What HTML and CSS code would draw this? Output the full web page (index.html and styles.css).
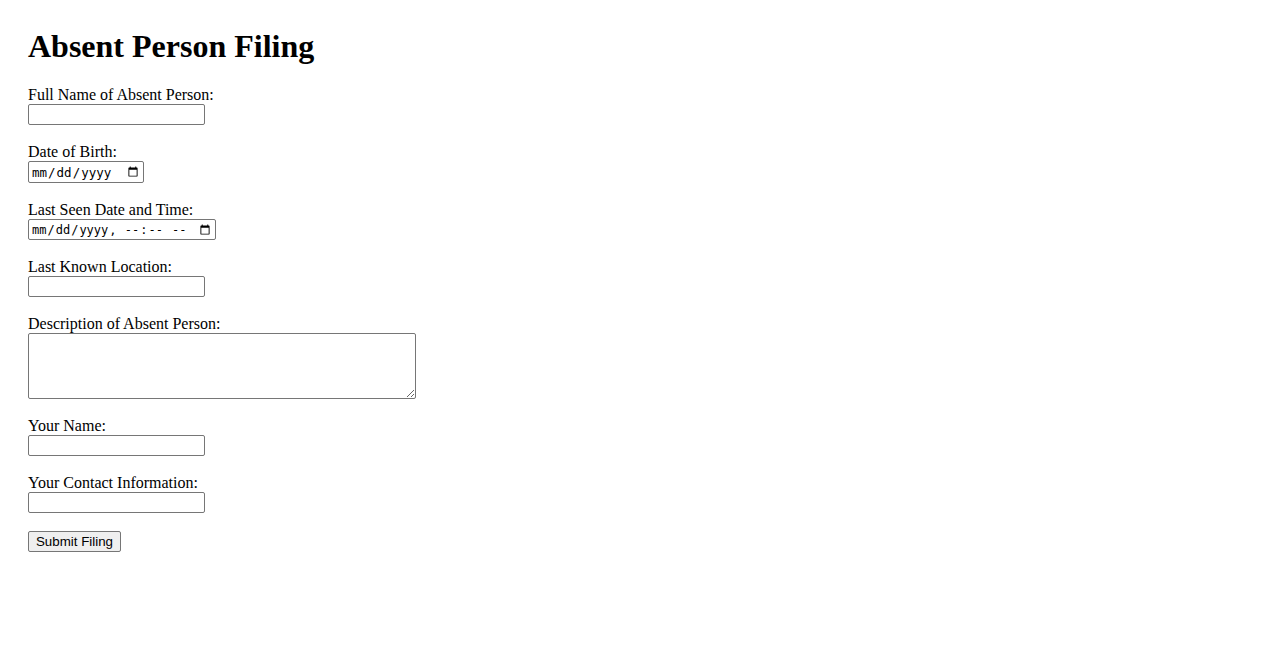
FILE: index.html
```html
<!DOCTYPE html>
<html lang="en">
<head>
<meta charset="utf-8">
<title>Absent Person Filing</title>
<link rel="stylesheet" href="styles.css">
</head>
<body>
<h1 class="title">Absent Person Filing</h1>
<form class="filing-form">
<label for="fullName">Full Name of Absent Person:</label><br>
<input class="field text-field" type="text" id="fullName" name="fullName"><br><br>
<label for="dob">Date of Birth:</label><br>
<input class="field date-field" type="date" id="dob" name="dob"><br><br>
<label for="lastSeen">Last Seen Date and Time:</label><br>
<input class="field datetime-field" type="datetime-local" id="lastSeen" name="lastSeen"><br><br>
<label for="location">Last Known Location:</label><br>
<input class="field text-field" type="text" id="location" name="location"><br><br>
<label for="description">Description of Absent Person:</label><br>
<textarea class="field area-field" id="description" name="description"></textarea><br><br>
<label for="yourName">Your Name:</label><br>
<input class="field text-field" type="text" id="yourName" name="yourName"><br><br>
<label for="contact">Your Contact Information:</label><br>
<input class="field text-field" type="text" id="contact" name="contact"><br><br>
<button class="submit-btn" type="submit">Submit Filing</button>
</form>
</body>
</html>
```
FILE: styles.css
```css
html { background: #fff; }
body {
  margin: 0;
  padding: 28px;
  font-family: "Liberation Serif", "Times New Roman", serif;
  font-size: 16px;
  color: #000;
}
.title {
  font-size: 32px;
  font-weight: bold;
  margin: 0 0 21px;
  line-height: 37px;
}
.filing-form {
  line-height: 18px;
}
.field {
  box-sizing: border-box;
  border: 1px solid #767676;
  border-radius: 2px;
  margin: 0;
  vertical-align: top;
  background: #fff;
}
.text-field {
  width: 177px;
  height: 21px;
  padding: 1px 2px;
  font-family: "Liberation Sans", Arial, sans-serif;
  font-size: 13.33px;
}
.date-field {
  width: 116px;
  height: 22px;
  padding: 1px 2px;
  font-family: "DejaVu Sans Mono", "Liberation Mono", monospace;
  font-size: 12.5px;
}
.datetime-field {
  width: 188px;
  height: 21px;
  padding: 1px 2px;
  font-family: "DejaVu Sans Mono", "Liberation Mono", monospace;
  font-size: 12px;
}
.area-field {
  width: 388px;
  height: 66px;
  padding: 2px;
  font-family: "Liberation Mono", monospace;
  font-size: 13.33px;
  resize: both;
}
.submit-btn {
  box-sizing: border-box;
  width: 93px;
  height: 21px;
  margin: 0;
  padding: 1px 6px;
  font-family: "Liberation Sans", Arial, sans-serif;
  font-size: 13.33px;
  color: #000;
  background: #efefef;
  border: 1px solid #767676;
  border-radius: 2px;
  vertical-align: top;
}
```
